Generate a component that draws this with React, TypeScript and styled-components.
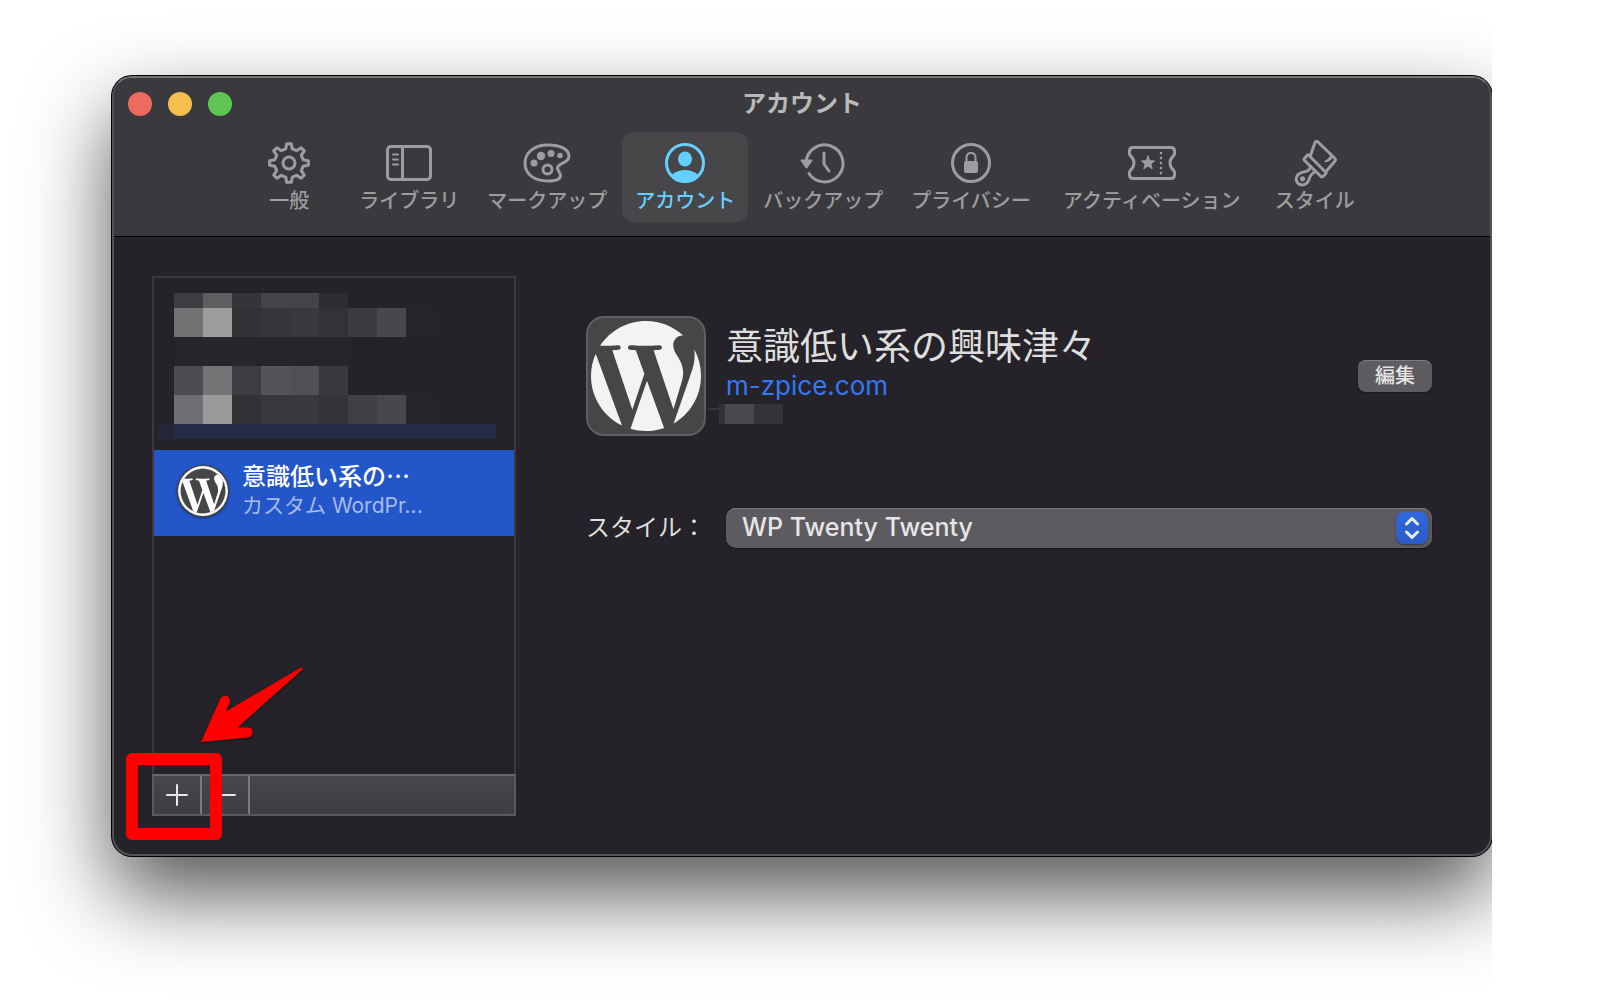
import React from "react";
import styled, { createGlobalStyle } from "styled-components";

const GlobalStyle = createGlobalStyle`
  * { box-sizing: border-box; }
  body {
    margin: 0;
    background: #fff;
    font-family: Inter, "Noto Sans CJK JP", sans-serif;
  }
  button, select { font: inherit; color: inherit; }
`;

const Stage = styled.main`
  display: flex;
  min-height: 100vh;
  margin-right: 112px;
  padding: 76px 0 148px 112px;
  overflow: hidden;
`;

const Window = styled.section`
  position: relative;
  flex: 1;
  min-width: 0;
  display: flex;
  flex-direction: column;
  border: 2px solid #535257;
  border-top-color: #747675;
  border-radius: 20px;
  background: #252329;
  box-shadow: 0 0 0 1px #000, 0 38px 84px rgba(0, 0, 0, 0.68);
`;

const Header = styled.header`
  display: flex;
  flex-direction: column;
  background: #3a393d;
  border-bottom: 1px solid #000;
  border-radius: 18px 18px 0 0;
`;

const TitleBar = styled.div`
  display: grid;
  grid-template-columns: 1fr auto 1fr;
  align-items: center;
  height: 54px;
  padding: 0 14px 2px;
`;

const Lights = styled.div`
  display: flex;
  gap: 16px;
`;

const Light = styled.button<{ $color: string }>`
  width: 24px;
  height: 24px;
  padding: 0;
  border: 0;
  border-radius: 50%;
  background: ${(p) => p.$color};
`;

const Title = styled.h1`
  margin: 0;
  font-size: 24px;
  line-height: 32px;
  font-weight: 700;
  color: #b9b9bb;
`;

const Toolbar = styled.nav`
  display: flex;
  justify-content: center;
  gap: 2px;
  padding-bottom: 14px;
`;

const Tab = styled.button<{ $active?: boolean; $wide?: boolean }>`
  display: flex;
  flex-direction: column;
  align-items: center;
  min-width: ${(p) => (p.$wide ? 212 : 110)}px;
  height: 90px;
  padding: 6px 13px 0;
  border: 0;
  border-radius: 12px;
  background: ${(p) => (p.$active ? "#474649" : "transparent")};
  color: ${(p) => (p.$active ? "#64d0ff" : "#9d9c9f")};
`;

const TabLabel = styled.span`
  font-size: 20px;
  line-height: 26px;
  font-weight: 500;
  white-space: nowrap;
`;

const Glyph = styled.svg`
  display: block;
  width: 50px;
  height: 50px;
  fill: none;
  stroke: currentColor;
  stroke-width: 3;
  stroke-linejoin: round;
  stroke-linecap: round;
`;

const Content = styled.div`
  display: flex;
  flex: 1;
  gap: 70px;
  padding: 39px 58px 38px 38px;
`;

const Sidebar = styled.aside`
  display: flex;
  flex-direction: column;
  width: 364px;
  flex: none;
`;

const AccountList = styled.div`
  flex: 1;
  min-height: 498px;
  border: 2px solid #3a383e;
  border-bottom: 0;
`;

const Redacted = styled.div`
  display: flex;
  flex-direction: column;
  padding: 15px 18px 11px 4px;
`;

const MosaicRow = styled.div<{ $half?: boolean }>`
  display: flex;
  height: ${(p) => (p.$half ? 15 : 29)}px;
  padding-left: 16px;
`;

const MosaicCell = styled.span<{ $color: string }>`
  width: 29px;
  background: ${(p) => p.$color};
`;

const MosaicBand = styled.div`
  height: 15px;
  border-left: 16px solid #26263a;
  background: #252a45;
`;

const AccountRow = styled.button`
  display: flex;
  align-items: center;
  gap: 12px;
  width: 100%;
  height: 86px;
  padding: 0 22px 4px;
  border: 0;
  background: #2356c9;
  text-align: left;
`;

const Avatar = styled.svg`
  flex: none;
  width: 54px;
  height: 54px;
  filter: drop-shadow(0 1px 1px rgba(0, 0, 0, 0.4));
`;

const AccountText = styled.span`
  display: flex;
  flex-direction: column;
  white-space: nowrap;
`;

const AccountName = styled.span`
  font-size: 24px;
  line-height: 30px;
  font-weight: 500;
  color: #fff;
`;

const AccountKind = styled.span`
  font-size: 21px;
  line-height: 28px;
  color: #a7bbe9;
`;

const ListFooter = styled.div`
  display: flex;
  height: 42px;
  border: 2px solid #5b5a5e;
  border-top-color: #68676b;
  background: linear-gradient(#48464b, #3f3d42);
`;

const FooterButton = styled.button`
  display: grid;
  place-items: center;
  width: 48px;
  padding: 0;
  border: 0;
  border-right: 2px solid #7b7a7e;
  background: transparent;
  color: #e8e8e8;
`;

const FooterGlyph = styled.svg`
  width: 22px;
  height: 22px;
  stroke: currentColor;
  stroke-width: 2;
  stroke-linecap: round;
`;

const Detail = styled.div`
  flex: 1;
  min-width: 0;
  padding-top: 40px;
`;

const Profile = styled.div`
  display: flex;
`;

const SiteIcon = styled.div`
  display: grid;
  place-items: center;
  flex: none;
  width: 120px;
  height: 120px;
  border: 2px solid #5f5e60;
  border-radius: 18px;
  background: #464646;
`;

const SiteLogo = styled.svg`
  width: 110px;
  height: 110px;
  fill: #f3f3f3;
`;

const SiteText = styled.div`
  display: flex;
  flex: 1;
  flex-direction: column;
  align-items: flex-start;
  padding-top: 8px;
`;

const SiteName = styled.h2`
  margin: 0 0 0 20px;
  font-size: 37px;
  line-height: 46px;
  font-weight: 400;
  color: #dedede;
  white-space: nowrap;
`;

const SiteLink = styled.a`
  margin-left: 20px;
  font-size: 26px;
  line-height: 32px;
  color: #3478f6;
  text-decoration: none;
`;

const HiddenUser = styled.div`
  display: flex;
  align-items: stretch;
  height: 20px;
  margin-top: 2px;
`;

const Dash = styled.span`
  align-self: flex-start;
  width: 11px;
  height: 2px;
  margin: 4px 0 0 2px;
  background: #37353b;
`;

const UserBlock = styled.span<{ $color: string; $narrow?: boolean }>`
  width: ${(p) => (p.$narrow ? 6 : 29)}px;
  background: ${(p) => p.$color};
`;

const EditButton = styled.button`
  align-self: center;
  width: 74px;
  height: 32px;
  padding: 0;
  border: 0;
  border-radius: 8px;
  background: #5e5c61;
  box-shadow: inset 0 1px 0 #7d7b80, 0 1px 2px rgba(0, 0, 0, 0.4);
  color: #e4e4e4;
  font-size: 20px;
  line-height: 32px;
  font-weight: 500;
`;

const Field = styled.div`
  display: flex;
  align-items: center;
  gap: 20px;
  margin-top: 72px;
`;

const FieldLabel = styled.label`
  width: 120px;
  font-size: 24px;
  line-height: 32px;
  color: #dedede;
  white-space: nowrap;
`;

const SelectBox = styled.div`
  position: relative;
  display: flex;
  flex: 1;
`;

const Select = styled.select`
  flex: 1;
  height: 40px;
  padding: 0 44px 3px 16px;
  border: 0;
  border-radius: 10px;
  appearance: none;
  background: #5d5b60;
  box-shadow: inset 0 1px 0 #7d7b80, 0 1px 2px rgba(0, 0, 0, 0.5);
  color: #e6e6e6;
  font-size: 25px;
  font-weight: 500;
`;

const Stepper = styled.svg`
  position: absolute;
  top: 4px;
  right: 4px;
  width: 32px;
  height: 32px;
  border-radius: 8px;
  background: linear-gradient(#3068dc, #2a5cc8);
  box-shadow: 0 1px 2px rgba(0, 0, 0, 0.4);
  fill: none;
  stroke: #e8edf9;
  stroke-width: 3;
  stroke-linecap: round;
  stroke-linejoin: round;
  pointer-events: none;
`;

const Marker = styled.div`
  position: absolute;
  left: 12px;
  bottom: 14px;
  width: 96px;
  height: 87px;
  border: 12px solid #f00;
  border-radius: 6px;
  pointer-events: none;
`;

const Arrow = styled.svg`
  position: absolute;
  left: 82px;
  bottom: 106px;
  width: 112px;
  height: 84px;
  fill: #f00;
  filter: drop-shadow(0 1px 1px rgba(0, 0, 0, 0.5));
  pointer-events: none;
`;

const WP_CUTOUT =
  "M33 256c0-32.3 6.9-63 19.3-90.7l106.4 291.4C84.3 420.5 33 344.2 33 256zm223 223c-21.9 0-43-3.2-63-9.1l66.9-194.4 68.5 187.8c.5 1.1 1 2.1 1.6 3.1-23.1 8.1-48 12.6-74 12.6zm30.7-327.5c13.4-.7 25.5-2.1 25.5-2.1 12-1.4 10.6-19.1-1.4-18.4 0 0-36.1 2.8-59.4 2.8-21.9 0-58.7-2.8-58.7-2.8-12-.7-13.4 17.7-1.4 18.4 0 0 11.4 1.4 23.4 2.1l34.7 95.2L200.6 393l-81.2-241.5c13.4-.7 25.5-2.1 25.5-2.1 12-1.4 10.6-19.1-1.4-18.4 0 0-36.1 2.8-59.4 2.8-4.2 0-9.1-.1-14.4-.3C109.6 73 178.1 33 256 33c58 0 110.9 22.2 150.6 58.5-1-.1-1.9-.2-2.9-.2-21.9 0-37.4 19.1-37.4 39.6 0 18.4 10.6 33.9 21.9 52.3 8.5 14.8 18.4 33.9 18.4 61.5 0 19.1-7.3 41.2-17 72.1l-22.2 74.3-80.7-239.6zm81.4 297.2l68.1-196.9c12.7-31.8 17-57.2 17-79.9 0-8.2-.5-15.8-1.5-22.9 17.4 31.8 27.3 68.2 27.3 107 0 82.3-44.6 154.1-110.9 192.7z";

function gearPath(teeth: number, outer: number, inner: number) {
  const step = (Math.PI * 2) / teeth;
  const points: string[] = [];
  for (let i = 0; i < teeth; i++) {
    const a = i * step - Math.PI / 2;
    const spots: [number, number][] = [
      [a - step * 0.29, inner],
      [a - step * 0.15, outer],
      [a + step * 0.15, outer],
      [a + step * 0.29, inner],
    ];
    spots.forEach(([t, r]) =>
      points.push(`${(25 + r * Math.cos(t)).toFixed(2)} ${(25 + r * Math.sin(t)).toFixed(2)}`)
    );
  }
  return `M${points.join("L")}Z`;
}

const tabs: { label: string; active?: boolean; wide?: boolean; glyph: React.ReactNode }[] = [
  {
    label: "一般",
    glyph: (
      <>
        <path d={gearPath(8, 19.5, 14.5)} />
        <circle cx="25" cy="25" r="6" />
      </>
    ),
  },
  {
    label: "ライブラリ",
    glyph: (
      <>
        <rect x="3.500" y="8.500" width="43" height="33" rx="3.500" />
        <path d="M18.500 8.500V41.500" />
        <path d="M9 16.500H14M9 21.500H14M9 26.500H14" strokeWidth="2" />
      </>
    ),
  },
  {
    label: "マークアップ",
    glyph: (
      <>
        <path d="M26 7C12 7 3 14.500 3 25.500C3 36.500 13 43 26 43C34 43 38.500 41.500 38.500 37.500C38.500 34.500 35.500 33 35.500 30C35.500 24.500 47 25.500 47 18.500C47 11 38 7 26 7Z" />
        <circle cx="25.500" cy="31.500" r="4.500" />
        <g fill="currentColor" stroke="none">
          <circle cx="12" cy="25" r="3.500" />
          <circle cx="19" cy="18" r="4.200" />
          <circle cx="29" cy="15.500" r="3.500" />
          <circle cx="38" cy="17.500" r="2.800" />
        </g>
      </>
    ),
  },
  {
    label: "アカウント",
    active: true,
    glyph: (
      <>
        <circle cx="25" cy="25" r="18.500" />
        <ellipse cx="25" cy="21" rx="7" ry="7.500" fill="currentColor" stroke="none" />
        <path d="M12 36.500C16 33.500 20 32 25 32C30 32 34 33.500 38 36.500C35 41 30 43.500 25 43.500C20 43.500 15 41 12 36.500Z" fill="currentColor" stroke="none" />
      </>
    ),
  },
  {
    label: "バックアップ",
    glyph: (
      <>
        <path d="M8 25A18.500 18.500 0 1 1 11 35.500" />
        <path d="M26 15V26L31 33" />
        <path d="M3.500 22.500H13.500L8.500 29.500Z" fill="currentColor" strokeWidth="2" />
      </>
    ),
  },
  {
    label: "プライバシー",
    glyph: (
      <>
        <circle cx="25" cy="25" r="18.500" />
        <path d="M20.500 24V19.500C20.500 16.500 22.300 15 25 15C27.700 15 29.500 16.500 29.500 19.500V24" strokeWidth="2" />
        <rect x="18" y="23" width="14" height="12" rx="2" fill="currentColor" stroke="none" />
      </>
    ),
  },
  {
    label: "アクティベーション",
    wide: true,
    glyph: (
      <>
        <path d="M6 9.500H44Q47.500 9.500 47.500 13V16C47.500 18 43 19 43 25C43 31 47.500 32 47.500 34V37Q47.500 40.500 44 40.500H6Q2.500 40.500 2.500 37V34C2.500 32 7 31 7 25C7 19 2.500 18 2.500 16V13Q2.500 9.500 6 9.500Z" />
        <path d="M34 15V36" strokeWidth="2.600" strokeDasharray="0.1 4.900" />
        <path d="M21 18L22.800 22.700L27.500 22.900L23.900 26L25.200 30.800L21 28.100L16.800 30.800L18.100 26L14.500 22.900L19.200 22.700Z" fill="currentColor" strokeWidth="1" />
      </>
    ),
  },
  {
    label: "スタイル",
    glyph: (
      <>
        <path d="M20.500 17.500L25 4.500Q26 2.500 28 4L44.500 20Q46 21.500 45 23L36 33.500" />
        <path d="M18.500 17L35.500 34Q36.500 35 35.500 36L33 38.500Q32 39.500 31 38.500L14.500 22.500Q13.500 21.500 14.500 20.500L17 17.500Q18 16.500 18.500 17Z" />
        <path d="M20.500 28.500Q20 32.500 15.500 33.500Q6.500 35 6.200 40.500Q6.300 46.500 12 47Q17 47 19 41.500Q20.500 36 25.500 33.500" />
        <path d="M41 15.500Q40.500 20.500 34.500 23.500Q39 24.500 42.500 19.500Z" fill="currentColor" strokeWidth="1" />
        <circle cx="12.500" cy="40.800" r="2.600" fill="currentColor" stroke="none" />
      </>
    ),
  },
];

const mosaic: { half?: boolean; cells: string[] }[] = [
  { half: true, cells: ["#3d3c40", "#5e5e60", "#353438", "#444348", "#444348", "#2d2c31"] },
  { cells: ["#727274", "#9c9c9c", "#323135", "#363539", "#39383c", "#333237", "#3d3b40", "#48474b", "#27252b"] },
  { cells: ["#27252b", "#28262b", "#272529", "#272529", "#272529", "#272529"] },
  { cells: ["#4d4c50", "#747476", "#3d3c41", "#545357", "#525056", "#3a383e"] },
  { cells: ["#6f6f73", "#9b9b9b", "#323135", "#38373b", "#3a3a3e", "#353339", "#413f44", "#48474b", "#27252b"] },
];

export default function App() {
  return (
    <>
      <GlobalStyle />
      <Stage>
        <Window>
          <Header>
            <TitleBar>
              <Lights>
                <Light type="button" aria-label="閉じる" $color="#ed6a5e" />
                <Light type="button" aria-label="しまう" $color="#f5bf4f" />
                <Light type="button" aria-label="拡大" $color="#61c554" />
              </Lights>
              <Title>アカウント</Title>
            </TitleBar>
            <Toolbar>
              {tabs.map((tab) => (
                <Tab key={tab.label} type="button" $active={tab.active} $wide={tab.wide}>
                  <Glyph viewBox="0 0 50 50" aria-hidden="true">
                    {tab.glyph}
                  </Glyph>
                  <TabLabel>{tab.label}</TabLabel>
                </Tab>
              ))}
            </Toolbar>
          </Header>

          <Content>
            <Sidebar>
              <AccountList>
                <Redacted aria-hidden="true">
                  {mosaic.map((row, r) => (
                    <MosaicRow key={r} $half={row.half}>
                      {row.cells.map((color, c) => (
                        <MosaicCell key={c} $color={color} />
                      ))}
                    </MosaicRow>
                  ))}
                  <MosaicBand />
                </Redacted>
                <AccountRow type="button">
                  <Avatar viewBox="0 0 512 512" aria-hidden="true">
                    <circle cx="256" cy="256" r="250" fill="#464646" />
                    <circle cx="256" cy="256" r="236" fill="#fff" />
                    <circle cx="256" cy="256" r="214" fill="#464646" />
                    <path d={WP_CUTOUT} fill="#fff" transform="translate(13 13) scale(.95)" />
                    <circle cx="256" cy="256" r="214" fill="#fff" />
                    <path d={WP_CUTOUT} fill="#464646" transform="translate(13 13) scale(.95)" />
                  </Avatar>
                  <AccountText>
                    <AccountName>意識低い系の⋯</AccountName>
                    <AccountKind>カスタム WordPr...</AccountKind>
                  </AccountText>
                </AccountRow>
              </AccountList>
              <ListFooter>
                <FooterButton type="button" aria-label="追加">
                  <FooterGlyph viewBox="0 0 22 22">
                    <path d="M1 11H21M11 1V21" />
                  </FooterGlyph>
                </FooterButton>
                <FooterButton type="button" aria-label="削除">
                  <FooterGlyph viewBox="0 0 22 22">
                    <path d="M1 11H21" />
                  </FooterGlyph>
                </FooterButton>
              </ListFooter>
            </Sidebar>

            <Detail>
              <Profile>
                <SiteIcon>
                  <SiteLogo viewBox="33 33 446 446" aria-hidden="true">
                    <path d={WP_CUTOUT} />
                  </SiteLogo>
                </SiteIcon>
                <SiteText>
                  <SiteName>意識低い系の興味津々</SiteName>
                  <SiteLink href="#">m-zpice.com</SiteLink>
                  <HiddenUser aria-hidden="true">
                    <Dash />
                    <UserBlock $narrow $color="#333237" />
                    <UserBlock $color="#4a484e" />
                    <UserBlock $color="#35333a" />
                  </HiddenUser>
                </SiteText>
                <EditButton type="button">編集</EditButton>
              </Profile>
              <Field>
                <FieldLabel htmlFor="style">スタイル：</FieldLabel>
                <SelectBox>
                  <Select id="style" defaultValue="twenty">
                    <option value="twenty">WP Twenty Twenty</option>
                  </Select>
                  <Stepper viewBox="0 0 32 32" aria-hidden="true">
                    <path d="M10.500 12L16 6.500L21.500 12M10.500 20L16 25.500L21.500 20" />
                  </Stepper>
                </SelectBox>
              </Field>
            </Detail>
          </Content>

          <Marker aria-hidden="true" />
          <Arrow viewBox="196 664 112 84" aria-hidden="true">
            <path d="M201 742L220 699.500Q222.500 695 226.500 696Q231 698 229.500 703L226 711.500L300 668Q303.500 667 302 670L237.500 727.500H248Q252.500 728 252.500 732Q252.500 736.500 248 737.500Z" />
          </Arrow>
        </Window>
      </Stage>
    </>
  );
}
